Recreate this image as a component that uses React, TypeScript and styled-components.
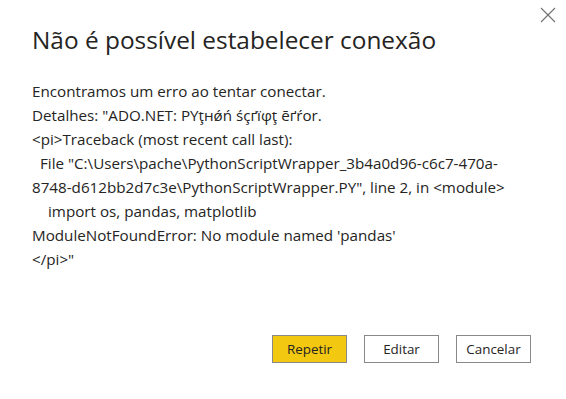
import React from "react";
import styled, { createGlobalStyle } from "styled-components";

const Global = createGlobalStyle`
  html, body { margin: 0; padding: 0; background: #ffffff; }
  body { font-family: "Segoe UI", "Open Sans", "Noto Sans", sans-serif; color: #252423; }
`;

const Dialog = styled.div`
  position: relative;
  width: 566px;
  height: 399px;
  box-sizing: border-box;
  padding: 22px 32px 0 32px;
  display: flex;
  flex-direction: column;
  background: #fff;
`;

const Close = styled.button`
  position: absolute;
  top: 6px;
  right: 9px;
  width: 18px;
  height: 18px;
  padding: 0;
  border: none;
  background: transparent;
  display: flex;
  align-items: center;
  justify-content: center;
`;

const Title = styled.h1`
  margin: 0;
  font-size: 24.4px;
  font-weight: 400;
  line-height: 36px;
  color: #252423;
`;

const Body = styled.div`
  margin-top: 21px;
  font-size: 15.2px;
  line-height: 24px;
  color: #252423;
`;

const Line = styled.div<{ $indent?: number }>`
  padding-left: ${(p) => p.$indent ?? 0}px;
  white-space: nowrap;
`;

const Actions = styled.div`
  margin-top: auto;
  margin-bottom: 36px;
  display: flex;
  justify-content: flex-end;
  gap: 17px;
  padding-right: 3px;
`;

const Btn = styled.button<{ $primary?: boolean }>`
  width: 75px;
  height: 28px;
  box-sizing: border-box;
  border: 1px solid #8a8886;
  background: ${(p) => (p.$primary ? "#F2C811" : "#ffffff")};
  color: #252423;
  font-family: inherit;
  font-size: 13.4px;
  padding: 0;
`;

export default function App() {
  return (
    <>
      <Global />
      <Dialog>
        <Close aria-label="Fechar">
          <svg width="16" height="16" viewBox="0 0 16 16">
            <path d="M1 1 L15 15 M15 1 L1 15" stroke="#707070" strokeWidth="1.1" fill="none" />
          </svg>
        </Close>
        <Title>Não é possível estabelecer conexão</Title>
        <Body>
          <Line>Encontramos um erro ao tentar conectar.</Line>
          <Line>Detalhes: "ADO.NET: РYţнǿń śçґïφţ ēґŕor.</Line>
          <Line>&lt;pi&gt;Traceback (most recent call last):</Line>
          <Line $indent={8}>File "C:\Users\pache\PythonScriptWrapper_3b4a0d96-c6c7-470a-</Line>
          <Line>8748-d612bb2d7c3e\PythonScriptWrapper.PY", line 2, in &lt;module&gt;</Line>
          <Line $indent={16}>import os, pandas, matplotlib</Line>
          <Line>ModuleNotFoundError: No module named 'pandas'</Line>
          <Line>&lt;/pi&gt;"</Line>
        </Body>
        <Actions>
          <Btn $primary>Repetir</Btn>
          <Btn>Editar</Btn>
          <Btn>Cancelar</Btn>
        </Actions>
      </Dialog>
    </>
  );
}
